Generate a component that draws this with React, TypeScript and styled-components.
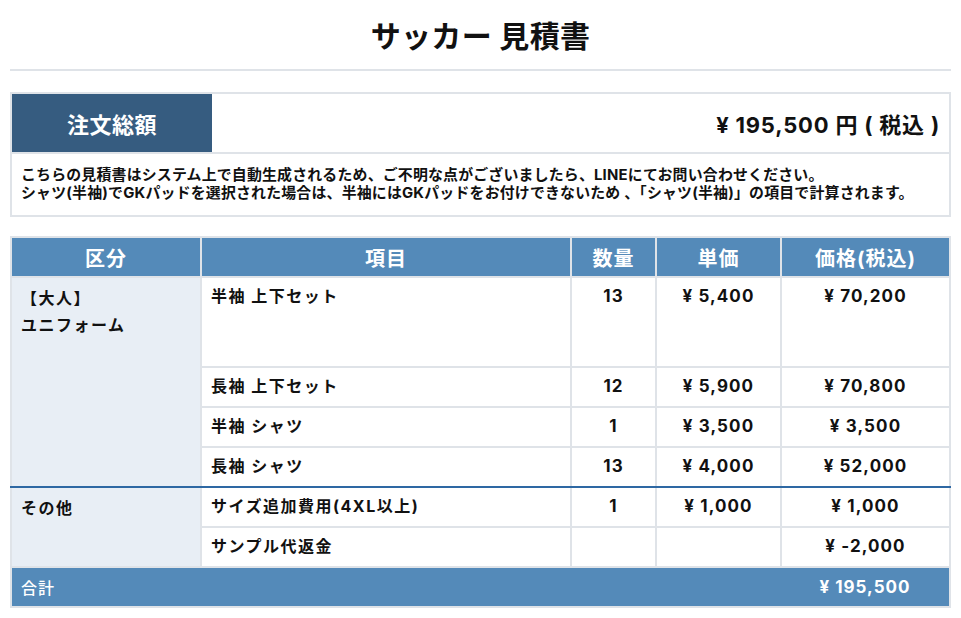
import styled, { createGlobalStyle } from "styled-components";

type Line = {
    name: string;
    qty?: string;
    unit?: string;
    price: string;
    tall?: boolean;
};

type Group = {
    label: string[];
    lines: Line[];
};

const groups: Group[] = [
    {
        label: ["【大人】", "ユニフォーム"],
        lines: [
            { name: "半袖 上下セット", qty: "13", unit: "¥ 5,400", price: "¥ 70,200", tall: true },
            { name: "長袖 上下セット", qty: "12", unit: "¥ 5,900", price: "¥ 70,800" },
            { name: "半袖 シャツ", qty: "1", unit: "¥ 3,500", price: "¥ 3,500" },
            { name: "長袖 シャツ", qty: "13", unit: "¥ 4,000", price: "¥ 52,000" },
        ],
    },
    {
        label: ["その他"],
        lines: [
            { name: "サイズ追加費用(4XL以上)", qty: "1", unit: "¥ 1,000", price: "¥ 1,000" },
            { name: "サンプル代返金", price: "¥ -2,000" },
        ],
    },
];

const GlobalStyle = createGlobalStyle`
    body {
        margin: 0;
        background: #fff;
        font-family: Inter, "Noto Sans CJK JP", sans-serif;
        color: #111;
    }
`;

function App() {
    return (
        <Page>
            <GlobalStyle />
            <Title>サッカー 見積書</Title>
            <Rule />

            <Summary>
                <SummaryTop>
                    <SummaryLabel>注文総額</SummaryLabel>
                    <SummaryAmount>¥ 195,500 円 ( 税込 )</SummaryAmount>
                </SummaryTop>
                <Note>
                    こちらの見積書はシステム上で自動生成されるため、ご不明な点がございましたら、LINEにてお問い合わせください。
                    <br />
                    シャツ(半袖)でGKパッドを選択された場合は、半袖にはGKパッドをお付けできないため 、「シャツ(半袖)」の項目で計算されます。
                </Note>
            </Summary>

            <Table>
                <colgroup>
                    <col style={{ width: 190 }} />
                    <col style={{ width: 370 }} />
                    <col style={{ width: 85 }} />
                    <col style={{ width: 125 }} />
                    <col />
                </colgroup>
                <thead>
                    <tr>
                        <Th>区分</Th>
                        <Th>項目</Th>
                        <Th>数量</Th>
                        <Th>単価</Th>
                        <Th>価格(税込)</Th>
                    </tr>
                </thead>
                <tbody>
                    {groups.map((g, gi) =>
                        g.lines.map((line, li) => {
                            const last = li === g.lines.length - 1 && gi < groups.length - 1;
                            return (
                                <Row key={`${gi}-${li}`} $tall={line.tall}>
                                    {li === 0 && (
                                        <CategoryCell rowSpan={g.lines.length} $divider={gi < groups.length - 1}>
                                            {g.label.map((t) => (
                                                <div key={t}>{t}</div>
                                            ))}
                                        </CategoryCell>
                                    )}
                                    <Td $divider={last}>{line.name}</Td>
                                    <NumTd $divider={last}>{line.qty}</NumTd>
                                    <NumTd $divider={last}>{line.unit}</NumTd>
                                    <NumTd $divider={last}>{line.price}</NumTd>
                                </Row>
                            );
                        })
                    )}
                </tbody>
                <tfoot>
                    <tr>
                        <TotalLabel colSpan={4}>合計</TotalLabel>
                        <TotalValue>¥ 195,500</TotalValue>
                    </tr>
                </tfoot>
            </Table>
        </Page>
    );
}

const Page = styled.div`
    padding: 0 10px 10px;
    width: 941px;
`;

const Title = styled.h1`
    margin: 0;
    padding: 20px 0 16px;
    text-align: center;
    font-size: 30px;
    line-height: 33px;
    font-weight: 700;
    letter-spacing: 0.3px;
`;

const Rule = styled.div`
    height: 2px;
    background: #dfe3e8;
`;

const Summary = styled.div`
    margin-top: 21px;
    border: 2px solid #dfe3e8;
`;

const SummaryTop = styled.div`
    display: flex;
    align-items: stretch;
    height: 58px;
    border-bottom: 2px solid #dfe3e8;
`;

const SummaryLabel = styled.div`
    width: 200px;
    display: flex;
    align-items: center;
    justify-content: center;
    background: #365c80;
    color: #fff;
    font-size: 22px;
    font-weight: 700;
    letter-spacing: 0.5px;
`;

const SummaryAmount = styled.div`
    flex: 1;
    display: flex;
    align-items: center;
    justify-content: flex-end;
    padding-right: 9px;
    font-size: 22px;
    font-weight: 700;
    letter-spacing: 0.8px;
`;

const Note = styled.div`
    padding: 12px 9px 13px;
    font-size: 14.9px;
    line-height: 18px;
    font-weight: 700;
    letter-spacing: 0.2px;
    white-space: nowrap;
`;

const Table = styled.table`
    margin-top: 19px;
    width: 941px;
    table-layout: fixed;
    border-collapse: collapse;
    border: 2px solid #dfe3e8;
`;

const Th = styled.th`
    height: 38px;
    padding: 0;
    background: #548ab9;
    color: #fff;
    font-size: 20px;
    font-weight: 700;
    letter-spacing: 1px;
    text-align: center;
    border: 2px solid #dfe3e8;
`;

const Row = styled.tr<{ $tall?: boolean }>`
    height: ${(p) => (p.$tall ? "90px" : "40px")};
`;

const Td = styled.td<{ $divider?: boolean }>`
    padding: 6px 9px 8px;
    vertical-align: top;
    font-size: 16px;
    line-height: 24px;
    font-weight: 700;
    letter-spacing: 1.5px;
    border: 2px solid #dfe3e8;
    border-bottom-color: ${(p) => (p.$divider ? "#2e68a3" : "#dfe3e8")};
`;

const NumTd = styled(Td)`
    text-align: center;
    font-size: 17px;
    letter-spacing: 1.1px;
`;

const CategoryCell = styled(Td)`
    background: #e8eef5;
    line-height: 27px;
    padding-top: 7px;
`;

const TotalLabel = styled.td`
    height: 38px;
    padding: 0 9px;
    background: #548ab9;
    color: #fff;
    font-size: 16px;
    font-weight: 500;
    letter-spacing: 1px;
    border: 2px solid #dfe3e8;
    border-right: none;
`;

const TotalValue = styled.td`
    padding: 0;
    background: #548ab9;
    color: #fff;
    font-size: 17px;
    font-weight: 700;
    letter-spacing: 1px;
    text-align: center;
    border: 2px solid #dfe3e8;
    border-left: none;
`;

export default App;
